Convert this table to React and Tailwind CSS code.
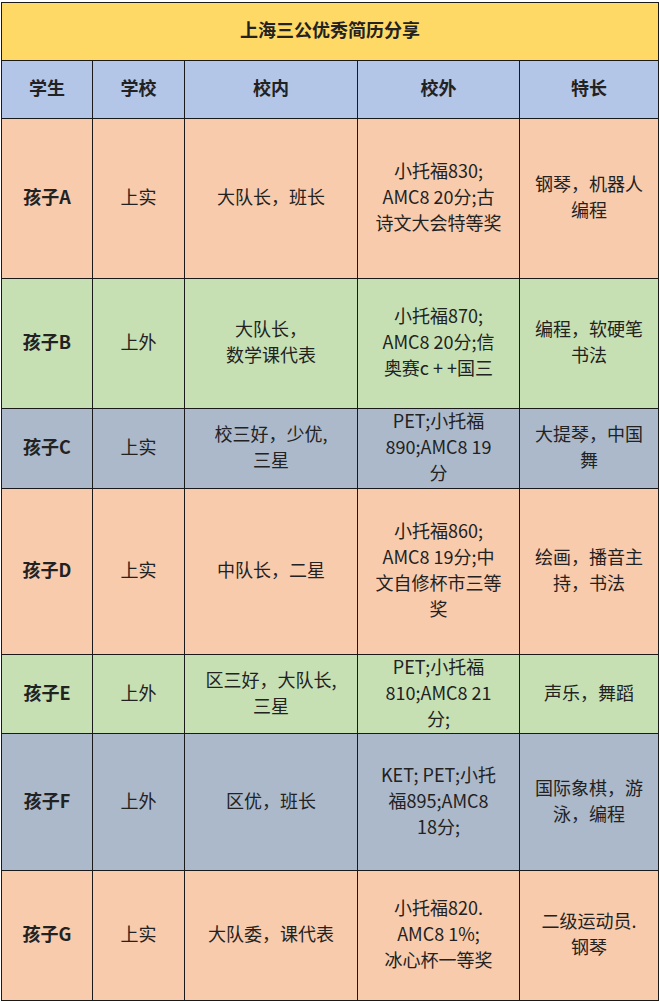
const rows = [
  { name: "孩子A", school: "上实", inner: ["大队长，班长"], outer: ["小托福830;", "AMC8 20分;古", "诗文大会特等奖"], skill: ["钢琴，机器人", "编程"], bg: "bg-[#f8cbad]", h: "h-[160px]" },
  { name: "孩子B", school: "上外", inner: ["大队长，", "数学课代表"], outer: ["小托福870;", "AMC8 20分;信", "奥赛c + +国三"], skill: ["编程，软硬笔", "书法"], bg: "bg-[#c6e0b4]", h: "h-[130px]" },
  { name: "孩子C", school: "上实", inner: ["校三好，少优,", "三星"], outer: ["PET;小托福", "890;AMC8 19", "分"], skill: ["大提琴，中国", "舞"], bg: "bg-[#acb9ca]", h: "h-[80px]" },
  { name: "孩子D", school: "上实", inner: ["中队长，二星"], outer: ["小托福860;", "AMC8 19分;中", "文自修杯市三等", "奖"], skill: ["绘画，播音主", "持，书法"], bg: "bg-[#f8cbad]", h: "h-[166px]" },
  { name: "孩子E", school: "上外", inner: ["区三好，大队长,", "三星"], outer: ["PET;小托福", "810;AMC8 21", "分;"], skill: ["声乐，舞蹈"], bg: "bg-[#c6e0b4]", h: "h-[79px]" },
  { name: "孩子F", school: "上外", inner: ["区优，班长"], outer: ["KET; PET;小托", "福895;AMC8", "18分;"], skill: ["国际象棋，游", "泳，编程"], bg: "bg-[#acb9ca]", h: "h-[137px]" },
  { name: "孩子G", school: "上实", inner: ["大队委，课代表"], outer: ["小托福820.", "AMC8 1%;", "冰心杯一等奖"], skill: ["二级运动员.", "钢琴"], bg: "bg-[#f8cbad]", h: "h-[130px]" },
]

// nudge text up a couple of pixels, like the Excel rendering
const Lines = ({ lines }) => (
  <div className="-mt-[5px]">
    {lines.map((l, i) => (
      <div key={i} className="whitespace-pre">{l}</div>
    ))}
  </div>
)

export default function App() {
  const cell = "border border-[#1a1a1a] text-center align-middle p-0"
  return (
    <div className="bg-white w-[659px] h-[1002px] pt-[2px] pl-[1px] text-[#222] text-[18px] leading-[26px]" style={{ fontFamily: '"Noto Sans CJK SC", "Microsoft YaHei", sans-serif' }}>
      <table className="table-fixed border-collapse w-[657px]">
        <colgroup>
          <col className="w-[91px]" />
          <col className="w-[92px]" />
          <col className="w-[173px]" />
          <col className="w-[162px]" />
          <col className="w-[139px]" />
        </colgroup>
        <tbody>
          <tr className="h-[58px] bg-[#ffd966]">
            <td colSpan={5} className={`${cell} font-bold`}><Lines lines={["上海三公优秀简历分享"]} /></td>
          </tr>
          <tr className="h-[58px] bg-[#b4c6e7] font-bold">
            {["学生", "学校", "校内", "校外", "特长"].map((t) => (
              <td key={t} className={cell}><Lines lines={[t]} /></td>
            ))}
          </tr>
          {rows.map((r) => (
            <tr key={r.name} className={`${r.h} ${r.bg}`}>
              <td className={`${cell} font-bold`}><Lines lines={[r.name]} /></td>
              <td className={cell}><Lines lines={[r.school]} /></td>
              <td className={cell}><Lines lines={r.inner} /></td>
              <td className={cell}><Lines lines={r.outer} /></td>
              <td className={cell}><Lines lines={r.skill} /></td>
            </tr>
          ))}
        </tbody>
      </table>
    </div>
  )
}
